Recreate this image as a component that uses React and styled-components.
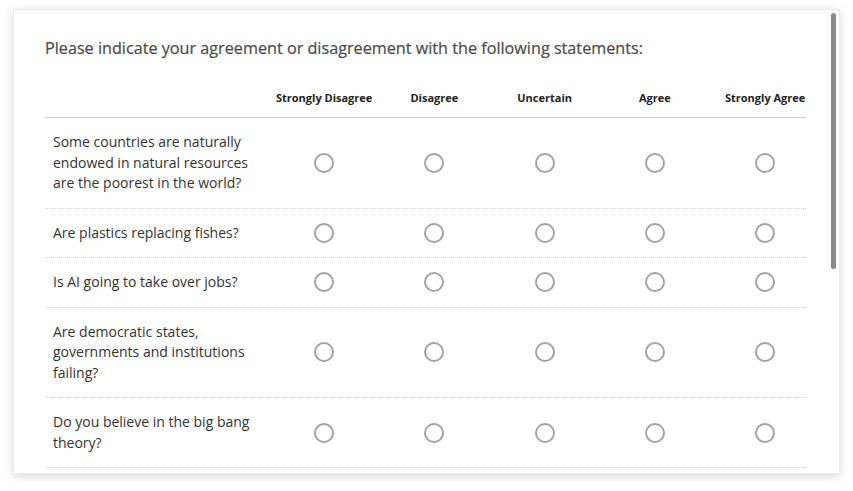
import React from 'react';
import styled, { createGlobalStyle } from 'styled-components';

const GlobalStyle = createGlobalStyle`
  body {
    margin: 0;
    background: #fff;
    font-family: 'Open Sans', 'Noto Sans', sans-serif;
  }
`;

const Page = styled.div`
  padding: 9px 13px;
`;

const Card = styled.div`
  position: relative;
  width: 827px;
  height: 465px;
  box-sizing: border-box;
  overflow: hidden;
  background: #fff;
  border: 1px solid #ececec;
  box-shadow: 0 2px 9px rgba(0, 0, 0, 0.16);
  padding: 28px 0 0 31px;
`;

const Scrollbar = styled.div`
  position: absolute;
  top: 3px;
  right: 3px;
  width: 5px;
  height: 256px;
  border-radius: 3px;
  background: #8a8a8a;
`;

const Title = styled.h2`
  margin: 0;
  font-size: 16.2px;
  line-height: 20px;
  font-weight: 400;
  color: #4a4a4a;
  -webkit-text-stroke: 0.2px #4a4a4a;
`;

const Row = styled.div`
  display: grid;
  grid-template-columns: 224px repeat(5, 110.25px);
  width: 761px;
  align-items: center;
  border-bottom: 1px ${p => (p.$head ? 'solid #cfcfcf' : 'dotted #d6d6d6')};
  ${p => p.$head && 'height: 60px; box-sizing: border-box; align-items: end; padding-bottom: 12px;'}
`;

const HeadCell = styled.div`
  text-align: center;
  font-size: 11px;
  line-height: 15px;
  font-weight: 700;
  color: #222;
  white-space: nowrap;
`;

const Question = styled.div`
  padding: 14px 8px;
  font-size: 14px;
  line-height: 20.5px;
  color: #333;
`;

const Cell = styled.div`
  display: flex;
  justify-content: center;
`;

const Radio = styled.span`
  width: 20px;
  height: 20px;
  box-sizing: border-box;
  border-radius: 50%;
  border: 2px solid #a3a3a3;
  background: #fff;
`;

const scale = ['Strongly Disagree', 'Disagree', 'Uncertain', 'Agree', 'Strongly Agree'];

const questions = [
  'Some countries are naturally endowed in natural resources are the poorest in the world?',
  'Are plastics replacing fishes?',
  'Is AI going to take over jobs?',
  'Are democratic states, governments and institutions failing?',
  'Do you believe in the big bang theory?',
];

export default function App() {
  return (
    <Page>
      <GlobalStyle />
      <Card>
        <Title>Please indicate your agreement or disagreement with the following statements:</Title>
        <Row $head>
          <div />
          {scale.map(s => <HeadCell key={s}>{s}</HeadCell>)}
        </Row>
        {questions.map(q => (
          <Row key={q}>
            <Question>{q}</Question>
            {scale.map(s => (
              <Cell key={s}><Radio /></Cell>
            ))}
          </Row>
        ))}
        <Scrollbar />
      </Card>
    </Page>
  );
}
